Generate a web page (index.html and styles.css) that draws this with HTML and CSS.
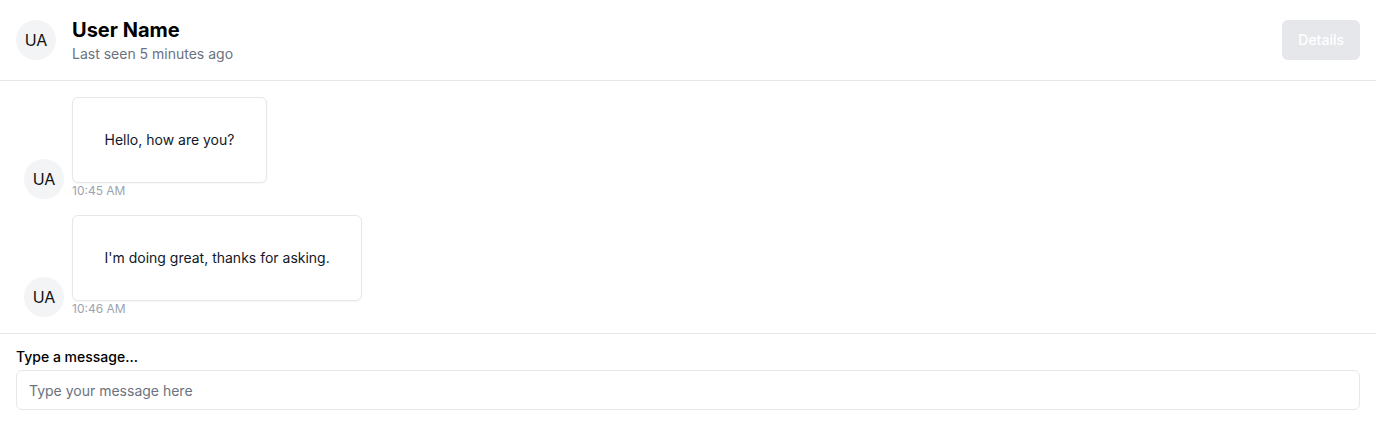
FILE: index.html
```html
<!DOCTYPE html>
<html lang="en">
<head>
<meta charset="utf-8">
<title>Chat</title>
<link rel="stylesheet" href="styles.css">
</head>
<body>
<div class="chat">
  <header class="header">
    <div class="avatar">UA</div>
    <div class="header-info">
      <div class="name">User Name</div>
      <div class="seen">Last seen 5 minutes ago</div>
    </div>
    <button class="details" disabled>Details</button>
  </header>
  <main class="messages">
    <div class="msg">
      <div class="avatar">UA</div>
      <div class="msg-body">
        <div class="bubble">Hello, how are you?</div>
        <div class="time">10:45 AM</div>
      </div>
    </div>
    <div class="msg">
      <div class="avatar">UA</div>
      <div class="msg-body">
        <div class="bubble">I'm doing great, thanks for asking.</div>
        <div class="time">10:46 AM</div>
      </div>
    </div>
  </main>
  <footer class="composer">
    <label class="label" for="msg">Type a message...</label>
    <input id="msg" class="input" type="text" placeholder="Type your message here">
  </footer>
</div>
</body>
</html>
```
FILE: styles.css
```css
* { box-sizing: border-box; }
html, body { margin: 0; padding: 0; background: #fff; }
body {
  font-family: Inter, "Noto Sans", sans-serif;
  color: #111827;
  font-size: 14px;
  line-height: 20px;
}
.chat { display: flex; flex-direction: column; }
.header {
  display: flex;
  align-items: center;
  gap: 16px;
  padding: 16px;
  border-bottom: 1px solid #e5e7eb;
}
.avatar {
  width: 40px;
  height: 40px;
  flex: none;
  border-radius: 50%;
  background: #f3f4f6;
  display: flex;
  align-items: center;
  justify-content: center;
  font-size: 16px;
  color: #111;
}
.header-info { flex: 1; display: flex; flex-direction: column; }
.name { font-size: 20px; line-height: 28px; font-weight: 700; color: #000; }
.seen { font-size: 14px; line-height: 20px; color: #6b7280; }
.details {
  height: 40px;
  padding: 0 16px 1px;
  border: none;
  border-radius: 6px;
  background: #e5e7eb;
  color: #fff;
  font-family: inherit;
  font-size: 14px;
  font-weight: 500;
}
.messages {
  display: flex;
  flex-direction: column;
  gap: 16px;
  padding: 16px 24px;
  border-bottom: 1px solid #e5e7eb;
}
.msg { display: flex; align-items: flex-end; gap: 8px; }
.msg-body { display: flex; flex-direction: column; align-items: flex-start; }
.bubble {
  padding: 32px 31.5px;
  border: 1px solid #e5e7eb;
  border-radius: 6px;
  background: #fff;
  box-shadow: 0 1px 2px rgba(0,0,0,0.04);
  color: #111827;
}
.time { font-size: 12px; line-height: 16px; color: #9ca3af; }
.composer {
  display: flex;
  flex-direction: column;
  gap: 6px;
  padding: 16px;
}
.label { font-size: 14px; line-height: 14px; font-weight: 500; color: #000; }
.input {
  height: 40px;
  padding: 0 12px;
  border: 1px solid #e5e7eb;
  border-radius: 6px;
  font-family: inherit;
  font-size: 14px;
  color: #111827;
  outline: none;
}
.input::placeholder { color: #6b7280; }
```
